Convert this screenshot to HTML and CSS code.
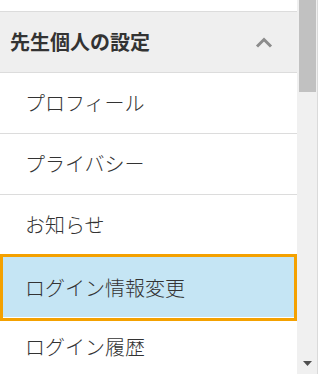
FILE: index.html
```html
<!DOCTYPE html>
<html lang="ja">
<head>
    <meta charset="UTF-8">
    <meta name="viewport" content="width=device-width, initial-scale=1.0">
    <title>先生個人の設定</title>
    <link rel="stylesheet" href="styles.css">
</head>
<body>
    <div class="frame">
        <!-- Settings menu -->
        <nav class="menu">
            <div class="menu-head">
                <h2>先生個人の設定</h2>
                <svg class="chevron" width="18" height="11" viewBox="0 0 18 11">
                    <path d="M2 9.5 L9 2.5 L16 9.5" fill="none" stroke="#8c8c8c" stroke-width="3"/>
                </svg>
            </div>
            <ul>
                <li>プロフィール</li>
                <li>プライバシー</li>
                <li>お知らせ</li>
                <li class="active">ログイン情報変更</li>
                <li>ログイン履歴</li>
            </ul>
        </nav>
        <!-- Scrollbar -->
        <div class="scrollbar">
            <div class="thumb"></div>
            <svg class="arrow" width="9" height="5" viewBox="0 0 9 5">
                <path d="M0 0 H9 L4.5 5 Z" fill="#505050"/>
            </svg>
        </div>
        <div class="edge"></div>
    </div>
</body>
</html>
```

FILE: styles.css
```css
* {
    box-sizing: border-box;
    margin: 0;
    padding: 0;
}

body {
    font-family: "Noto Sans CJK JP", "Noto Sans", sans-serif;
    background-color: #fff;
    color: #333;
}

.frame {
    display: flex;
    height: 374px;
    overflow: hidden;
}

.menu {
    width: 297px;
    padding-top: 11px;
    overflow: hidden;
}

.menu-head {
    height: 62px;
    background: #efefef;
    border-top: 1px solid #dcdcdc;
    border-bottom: 1px solid #dcdcdc;
    display: flex;
    justify-content: space-between;
    align-items: center;
    padding: 0 24px 0 10px;
}

.menu-head h2 {
    font-size: 20px;
    font-weight: 700;
    line-height: 1;
    color: #333;
}

.menu ul {
    list-style: none;
}

.menu li {
    height: 61px;
    border-bottom: 1px solid #dcdcdc;
    display: flex;
    align-items: center;
    padding-left: 25px;
    font-size: 20px;
    font-weight: 300;
    line-height: 1;
    color: #333;
}

.menu li.active {
    position: relative;
    z-index: 1;
    height: 67px;
    margin: -2px 0 -4px;
    border: 3px solid #f4a100;
    padding-left: 22px;
    background: #c5e5f4;
    box-shadow: inset 0 -1px 0 #fff;
}

.scrollbar {
    width: 20px;
    background: #f0f0f0;
    padding: 0 1px 0 2px;
    display: flex;
    flex-direction: column;
    align-items: center;
}

.thumb {
    width: 100%;
    height: 92px;
    background: #c1c1c1;
}

.arrow {
    margin-top: auto;
    margin-bottom: 8px;
}

.edge {
    width: 1px;
    background: #dadada;
}
```
